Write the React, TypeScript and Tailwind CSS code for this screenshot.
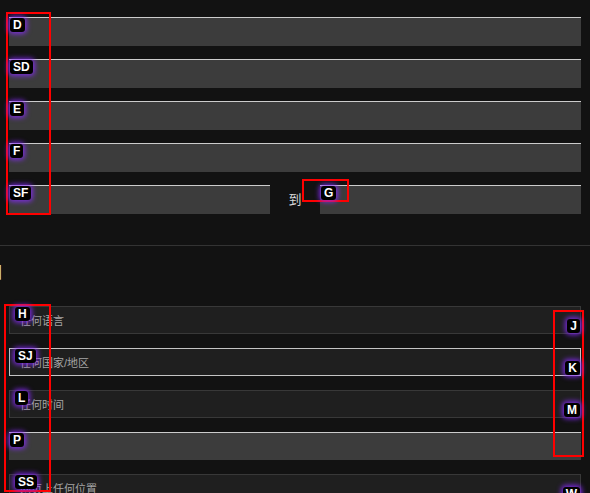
const FONT = { fontFamily: '"Liberation Sans", "Noto Sans CJK SC", sans-serif' };

function Hint({ label, className }: { label: string; className: string }) {
  return (
    <span
      className={`absolute z-10 h-[14px] rounded-[3px] bg-black px-[3px] text-[12px] font-bold leading-[14px] text-white shadow-[0_0_5px_2px_rgba(138,43,255,0.8)] ${className}`}
      style={FONT}
    >
      {label}
    </span>
  );
}

function TextField({ hint, className = "" }: { hint?: string; className?: string }) {
  return (
    <div className={`relative h-[29px] border-t border-[#cccccc] bg-[#3c3c3c] ${className}`}>
      {hint && <Hint label={hint} className="left-[1px] top-0" />}
    </div>
  );
}

type SelectRow = {
  text: string;
  left: string;
  right: string;
  focused?: boolean;
};

const SELECTS: SelectRow[] = [
  { text: "任何语言", left: "H", right: "J" },
  { text: "任何国家/地区", left: "SJ", right: "K", focused: true },
  { text: "任何时间", left: "L", right: "M" },
];

export default function App() {
  return (
    <div className="relative h-[493px] w-[590px] overflow-hidden bg-[#121212]" style={FONT}>
      <div className="flex flex-col gap-[13px] px-[9px] pt-[17px]">
        <TextField hint="D" />
        <TextField hint="SD" />
        <TextField hint="E" />
        <TextField hint="F" />
        <div className="flex items-center">
          <TextField hint="SF" className="w-[261px]" />
          <span className="w-[50px] text-center text-[13px] text-[#d8d8d8]">到</span>
          <TextField hint="G" className="flex-1" />
        </div>
      </div>

      <div className="mt-[31px] border-t border-[#333333]" />

      <div className="mt-[17px] -ml-[298px] h-[20px] w-[300px] text-right text-[16px] leading-[20px] text-[#dddddd]">
        然后按以下标准缩小搜索结果范围
      </div>

      <div className="mt-[23px] flex flex-col gap-[14px] px-[9px]">
        {SELECTS.map((row) => (
          <div
            key={row.text}
            className={`relative flex h-[28px] items-center border bg-[#1f1f1f] pl-[10px] pt-[2px] text-[11px] text-[#a4a4a4] ${
              row.focused ? "border-[#c4c4c4]" : "border-[#383838]"
            }`}
          >
            {row.text}
            <Hint label={row.left} className="left-[5px] top-0" />
            <Hint label={row.right} className="right-0 top-[12px]" />
          </div>
        ))}
        <div className="relative h-[28px] border-t border-[#cccccc] bg-[#3c3c3c]">
          <Hint label="P" className="left-[1px] top-0" />
        </div>
        <div className="relative flex h-[28px] items-center border border-[#383838] bg-[#1f1f1f] pl-[10px] pt-[2px] text-[11px] text-[#a4a4a4]">
          网页上任何位置
          <Hint label="SS" className="left-[5px] top-0" />
          <Hint label="W" className="right-0 top-[12px]" />
        </div>
      </div>

      {/* annotation boxes */}
      <div className="absolute left-[6px] top-[12px] h-[203px] w-[45px] border-2 border-[#ff0000]" />
      <div className="absolute left-[302px] top-[179px] h-[23px] w-[47px] border-2 border-[#ff0000]" />
      <div className="absolute left-[4px] top-[304px] h-[188px] w-[47px] border-2 border-[#ff0000]" />
      <div className="absolute left-[553px] top-[310px] h-[147px] w-[31px] border-2 border-[#ff0000]" />
    </div>
  );
}
